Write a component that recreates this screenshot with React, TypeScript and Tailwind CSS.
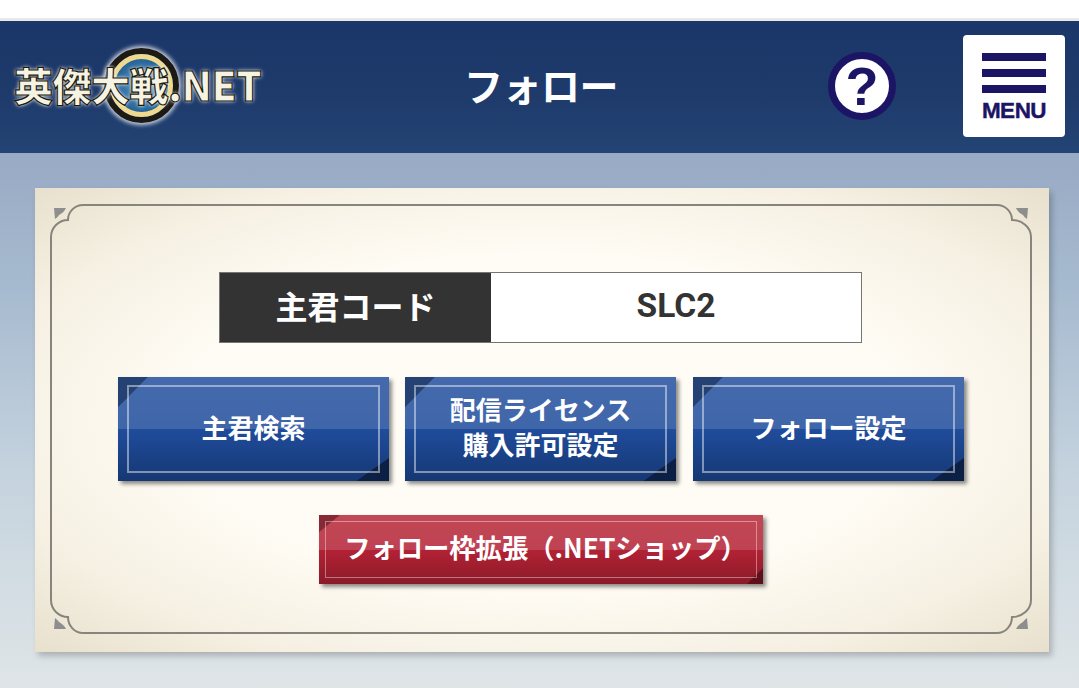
const font = "font-['Noto_Sans_CJK_JP','Noto_Sans',sans-serif]";

const Logo = () => (
  <div className="relative h-[80px] w-[246px]">
    <div className="absolute left-[90px] top-[1px] h-[75px] w-[75px] rounded-full border-[6px] border-[#1d1a16] bg-[#2f6ea3] shadow-[0_0_4px_2px_rgba(255,255,255,0.8)]">
      <div className="h-full w-full rounded-full border-[5px] border-[#eed98f] bg-[radial-gradient(circle,#5d9ac4_0%,#215f95_75%)]" />
    </div>
    <div className="absolute left-0 top-[10px] flex items-baseline whitespace-nowrap font-['Noto_Sans_CJK_JP',sans-serif] font-black leading-[54px] text-[#f5f3e4] [-webkit-text-stroke:1.2px_#1d1a0c] [text-shadow:0_0_4px_#fff,0_0_2px_#fff]">
      <span className="text-[39px] tracking-[-0.5px]">英傑大戦</span>
      <span className="text-[40px] tracking-[-0.5px]">.NET</span>
    </div>
  </div>
);

const HelpIcon = () => (
  <div className="flex h-[68px] w-[68px] items-center justify-center rounded-full border-[7px] border-[#1c1464] bg-white font-['Liberation_Sans',sans-serif] text-[54px] font-bold leading-none text-[#1c1464]">
    ?
  </div>
);

const MenuButton = () => (
  <div className="flex h-[102px] w-[102px] flex-col items-center rounded-[4px] bg-white pt-[18px]">
    <div className="h-[8px] w-[64px] bg-[#1c1464]" />
    <div className="mt-[8px] h-[8px] w-[64px] bg-[#1c1464]" />
    <div className="mt-[8px] h-[8px] w-[64px] bg-[#1c1464]" />
    <div className="mt-[6px] font-['Liberation_Sans',sans-serif] text-[22.5px] font-bold leading-[24px] tracking-[-0.5px] text-[#1c1464] [-webkit-text-stroke:0.4px_#1c1464]">
      MENU
    </div>
  </div>
);

const CardFrame = () => (
  <svg className="absolute inset-0" width="1014" height="464" fill="none">
    <path
      d="M48 17H962A15 15 0 0 1 977 32A19 17 0 0 1 996 49V412A19 17 0 0 1 977 429A15 16 0 0 1 962 445H48A15 16 0 0 1 33 429A17 17 0 0 1 16 412V49A17 17 0 0 1 33 32A15 15 0 0 1 48 17Z"
      stroke="#86847c"
      strokeWidth="2"
    />
    <g fill="#8e8e8e">
      <path d="M19 20H31C29 24 26 26 24 27C23 29 21 30 20 31Z" />
      <path d="M993 20H981C983 24 986 26 988 27C989 29 991 30 992 31Z" />
      <path d="M19 441H31C29 437 26 435 24 434C23 432 21 431 20 430Z" />
      <path d="M993 441H981C983 437 986 435 988 434C989 432 991 431 992 430Z" />
    </g>
  </svg>
);

const GlossButton = ({
  lines,
  red,
  className,
  insetClass,
}: {
  lines: string[];
  red?: boolean;
  className: string;
  insetClass: string;
}) => (
  <div
    className={`relative flex items-center justify-center overflow-hidden pb-[6px] shadow-[3px_3px_4px_rgba(0,0,0,0.45)] ${className} ${
      red
        ? "bg-[linear-gradient(#b82838_0%,#b32235_50%,#8b1a28_100%)]"
        : "bg-[linear-gradient(#24509f_0%,#1f4c9c_50%,#163873_100%)]"
    }`}
  >
    <div className="absolute inset-x-0 top-0 h-1/2 bg-white/15" />
    <svg
      className="absolute inset-0 h-full w-full"
      viewBox="0 0 100 100"
      preserveAspectRatio="none"
    >
      <polygon
        points={red ? "0,0 4.7,0 0,25" : "0,0 11,0 0,29"}
        fill={red ? "#5d1520" : "#12284f"}
        fillOpacity="0.6"
      />
      <polygon
        points={red ? "100,100 96.4,100 100,77" : "100,100 88,100 100,78"}
        fill={red ? "#5d0f1a" : "#0c1f44"}
      />
    </svg>
    <div className={`absolute ${insetClass}`} />
    <div
      className={`relative text-center font-bold text-white ${
        red ? "pl-[9px] text-[26.3px] leading-[36px]" : "text-[26px] leading-[35px]"
      }`}
    >
      {lines.map((line) => (
        <div key={line} className="whitespace-nowrap">
          {line}
        </div>
      ))}
    </div>
  </div>
);

export default function App() {
  const blueFrame = "inset-x-[9px] inset-y-[8px] border-[2.5px] border-white/45";

  return (
    <div className={`flex h-[688px] w-full flex-col overflow-hidden bg-white ${font}`}>
      <div className="h-[18px] shrink-0 bg-white" />
      <div className="h-[3px] shrink-0 bg-[#e8e8e8]" />
      <header className="flex h-[132px] shrink-0 items-center bg-[linear-gradient(#1b3668,#1e3b6c_60%,#234474)] pl-[14px] pr-[14px]">
        <div className="w-[450px] shrink-0">
          <Logo />
        </div>
        <h1 className="w-[152px] shrink-0 whitespace-nowrap pb-[6px] text-[39px] font-bold leading-none tracking-[-0.5px] text-white">
          フォロー
        </h1>
        <div className="mb-[2px] ml-[212px] mr-[67px] shrink-0">
          <HelpIcon />
        </div>
        <div className="mb-[3px] shrink-0">
          <MenuButton />
        </div>
      </header>

      <main className="flex-1 bg-[linear-gradient(#98aac4_0%,#a6bacf_25%,#c5d3de_60%,#dfe5e7_100%)] pl-[35px] pt-[35px]">
        <section className="relative flex h-[464px] w-[1014px] flex-col items-center bg-[radial-gradient(ellipse_at_center,#fffcf5_50%,#f5f0e2_78%,#e8e0cd_100%)] pr-[2px] pt-[84px] shadow-[3px_4px_6px_rgba(0,0,0,0.22)]">
          <CardFrame />
          <div className="relative -ml-[1px] flex h-[71px] w-[643px] border border-[#77756f]">
            <div className="flex w-[271px] items-center justify-center bg-[#333333] pb-[6px] text-[32px] font-bold text-white">
              主君コード
            </div>
            <div className="flex flex-1 items-center justify-center bg-white pb-[2px] font-['Roboto',sans-serif] text-[33.5px] font-bold text-[#333333]">
              SLC2
            </div>
          </div>
          <div className="relative mt-[34px] flex gap-[16px]">
            <GlossButton lines={["主君検索"]} className="h-[104px] w-[271px]" insetClass={blueFrame} />
            <GlossButton lines={["配信ライセンス", "購入許可設定"]} className="h-[104px] w-[271px]" insetClass={blueFrame} />
            <GlossButton lines={["フォロー設定"]} className="ml-[1px] h-[104px] w-[271px]" insetClass={blueFrame} />
          </div>
          <div className="relative mt-[34px]">
            <GlossButton red lines={["フォロー枠拡張（.NETショップ）"]} className="h-[69px] w-[444px]" insetClass="inset-x-[6px] inset-y-[6px] border-[1.5px] border-white/40" />
          </div>
        </section>
      </main>
    </div>
  );
}
